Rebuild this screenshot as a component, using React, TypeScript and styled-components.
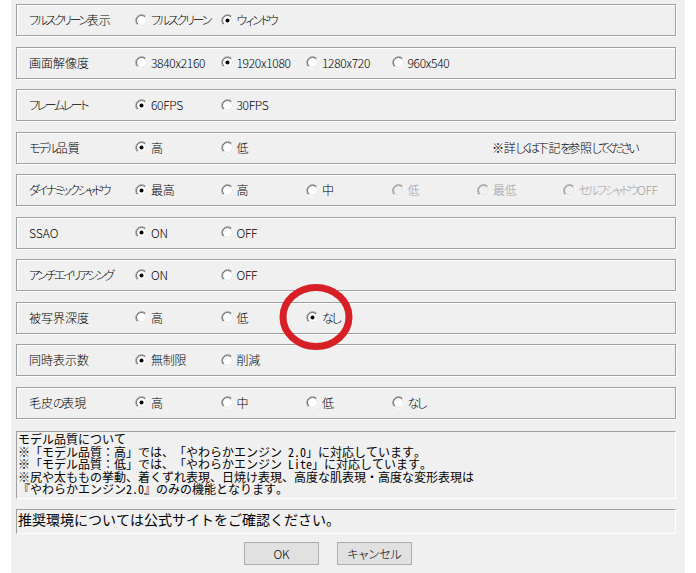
import React from "react";
import styled, { createGlobalStyle } from "styled-components";

const GlobalStyle = createGlobalStyle`
  html, body { margin: 0; padding: 0; background: #ffffff; }
  body { font-family: "Noto Sans CJK JP", "Noto Sans", sans-serif; color: #000; }
`;

const Dialog = styled.div`
  position: relative;
  margin-left: 11px;
  width: 674px;
  height: 573px;
  box-sizing: border-box;
  padding: 4px 9px 0 5px;
  background: #f0f0f0;
  display: flex;
  flex-direction: column;
`;

const Rows = styled.div`
  display: flex;
  flex-direction: column;
  gap: 10.5px;
`;

const Frame = styled.div`
  height: 32px;
  box-sizing: border-box;
  border: 1px solid #a0a0a0;
  box-shadow: inset 1px 1px 0 #ffffff, 1px 1px 0 #ffffff;
  display: grid;
  grid-template-columns: 106px repeat(6, 85.5px);
  align-items: center;
  padding-left: 12px;
  font-size: 12px;
  font-weight: 300;
  line-height: 16px;
  font-feature-settings: "palt" 1;
  font-variant-east-asian: proportional-width;
`;

const Kana = styled.span<{ $tight: number }>`
  letter-spacing: ${(p) => p.$tight}px;
`;

const Label = styled.div`
  white-space: nowrap;
  letter-spacing: 0;
`;

const Option = styled.div<{ $disabled?: boolean }>`
  position: relative;
  display: flex;
  align-items: center;
  gap: 3px;
  white-space: nowrap;
  letter-spacing: -0.3px;
  color: ${(p) => (p.$disabled ? "#a0a0a0" : "#000")};
  svg { flex-shrink: 0; }
`;

const Note = styled.div`
  grid-column: 6 / span 2;
  padding-left: 15px;
  white-space: nowrap;
  letter-spacing: -0.3px;
`;

const Mark = styled.svg`
  position: absolute;
  left: -30px;
  top: -29.5px;
  pointer-events: none;
`;

const InfoBox = styled.div<{ $h: number; $size: number }>`
  height: ${(p) => p.$h}px;
  box-sizing: border-box;
  border-top: 1px solid #a0a0a0;
  border-left: 1px solid #a0a0a0;
  border-right: 1px solid #ffffff;
  border-bottom: 1px solid #ffffff;
  padding: 1px 0 0 1px;
  font-family: "Noto Sans Mono CJK JP", "Noto Sans CJK JP", monospace;
  font-size: ${(p) => p.$size}px;
  line-height: ${(p) => (p.$size === 12 ? "12.5px" : "16px")};
  text-spacing-trim: space-all;
  white-space: nowrap;
  overflow: hidden;
`;

const FirstInfo = styled(InfoBox)`
  margin-top: 12.5px;
`;

const SecondInfo = styled(InfoBox)`
  margin-top: 10px;
`;

const ButtonRow = styled.div`
  display: flex;
  gap: 18px;
  margin-top: 8px;
  padding-left: 228px;
`;

const Button = styled.button`
  width: 75px;
  height: 23px;
  box-sizing: border-box;
  border: 1px solid #adadad;
  background: #e1e1e1;
  font-family: "Noto Sans CJK JP", sans-serif;
  font-size: 12px;
  font-weight: 300;
  font-feature-settings: "palt" 1;
  color: #000;
  padding: 0;
  line-height: 20px;
`;

const KANA = /([\u3040-\u30ff\uff66-\uff9f]+)/;

function JText({ text, tight }: { text: string; tight: number }) {
  return (
    <>
      {text.split(KANA).map((s, i) =>
        i % 2 === 1 ? (
          <Kana key={i} $tight={tight}>
            {s}
          </Kana>
        ) : (
          <React.Fragment key={i}>{s}</React.Fragment>
        )
      )}
    </>
  );
}

const pt = (c: number, r: number, deg: number) => {
  const a = (deg * Math.PI) / 180;
  return `${(c + r * Math.cos(a)).toFixed(2)} ${(c - r * Math.sin(a)).toFixed(2)}`;
};

const arc = (r: number, from: number, to: number) =>
  `M ${pt(6.5, r, from)} A ${r} ${r} 0 0 1 ${pt(6.5, r, to)}`;

function Radio({ checked, disabled }: { checked?: boolean; disabled?: boolean }) {
  return (
    <svg width="13" height="13" viewBox="0 0 13 13">
      <circle cx="6.5" cy="6.5" r="4.5" fill={disabled ? "#f0f0f0" : "#ffffff"} />
      <path d={arc(6, 225, 45)} stroke="#a0a0a0" strokeWidth="1" fill="none" />
      <path d={arc(6, 45, 225)} stroke="#ffffff" strokeWidth="1" fill="none" />
      <path d={arc(5, 225, 45)} stroke={disabled ? "#a0a0a0" : "#696969"} strokeWidth="1" fill="none" />
      <path d={arc(5, 45, 225)} stroke="#e3e3e3" strokeWidth="1" fill="none" />
      {checked && <circle cx="6.5" cy="6.5" r="2" fill={disabled ? "#a0a0a0" : "#000"} />}
    </svg>
  );
}

type Opt = { t: string; checked?: boolean; disabled?: boolean; marked?: boolean };
type Row = { label: string; opts: Opt[]; note?: string };

const rows: Row[] = [
  { label: "フルスクリーン表示", opts: [{ t: "フルスクリーン" }, { t: "ウィンドウ", checked: true }] },
  {
    label: "画面解像度",
    opts: [{ t: "3840x2160" }, { t: "1920x1080", checked: true }, { t: "1280x720" }, { t: "960x540" }],
  },
  { label: "フレームレート", opts: [{ t: "60FPS", checked: true }, { t: "30FPS" }] },
  {
    label: "モデル品質",
    opts: [{ t: "高", checked: true }, { t: "低" }],
    note: "※詳しくは下記を参照してください",
  },
  {
    label: "ダイナミックシャドウ",
    opts: [
      { t: "最高", checked: true },
      { t: "高" },
      { t: "中" },
      { t: "低", disabled: true },
      { t: "最低", disabled: true },
      { t: "セルフシャドウOFF", disabled: true },
    ],
  },
  { label: "SSAO", opts: [{ t: "ON", checked: true }, { t: "OFF" }] },
  { label: "アンチエイリアシング", opts: [{ t: "ON", checked: true }, { t: "OFF" }] },
  { label: "被写界深度", opts: [{ t: "高" }, { t: "低" }, { t: "なし", checked: true, marked: true }] },
  { label: "同時表示数", opts: [{ t: "無制限", checked: true }, { t: "削減" }] },
  { label: "毛皮の表現", opts: [{ t: "高", checked: true }, { t: "中" }, { t: "低" }, { t: "なし" }] },
];

export default function App() {
  return (
    <>
      <GlobalStyle />
      <Dialog>
        <Rows>
          {rows.map((r) => (
            <Frame key={r.label}>
              <Label>
                <JText text={r.label} tight={-2.4} />
              </Label>
              {r.opts.map((o, i) => (
                <Option key={i} $disabled={o.disabled}>
                  <Radio checked={o.checked} disabled={o.disabled} />
                  <span>
                    <JText text={o.t} tight={-2.2} />
                  </span>
                  {o.marked && (
                    <Mark width="80" height="74" viewBox="0 0 80 74">
                      <ellipse cx="40" cy="37" rx="33" ry="29.5" fill="none" stroke="#d71f26" strokeWidth="7" />
                    </Mark>
                  )}
                </Option>
              ))}
              {r.note && (
                <Note>
                  <JText text={r.note} tight={-3} />
                </Note>
              )}
            </Frame>
          ))}
        </Rows>
        <FirstInfo $h={68} $size={12}>
          <div>モデル品質について</div>
          <div>※「モデル品質：高」では、「やわらかエンジン 2.0」に対応しています。</div>
          <div>※「モデル品質：低」では、「やわらかエンジン Lite」に対応しています。</div>
          <div>※尻や太ももの挙動、着くずれ表現、日焼け表現、高度な肌表現・高度な変形表現は</div>
          <div>『やわらかエンジン2.0』のみの機能となります。</div>
        </FirstInfo>
        <SecondInfo $h={25} $size={14}>
          推奨環境については公式サイトをご確認ください。
        </SecondInfo>
        <ButtonRow>
          <Button>OK</Button>
          <Button>キャンセル</Button>
        </ButtonRow>
      </Dialog>
    </>
  );
}
